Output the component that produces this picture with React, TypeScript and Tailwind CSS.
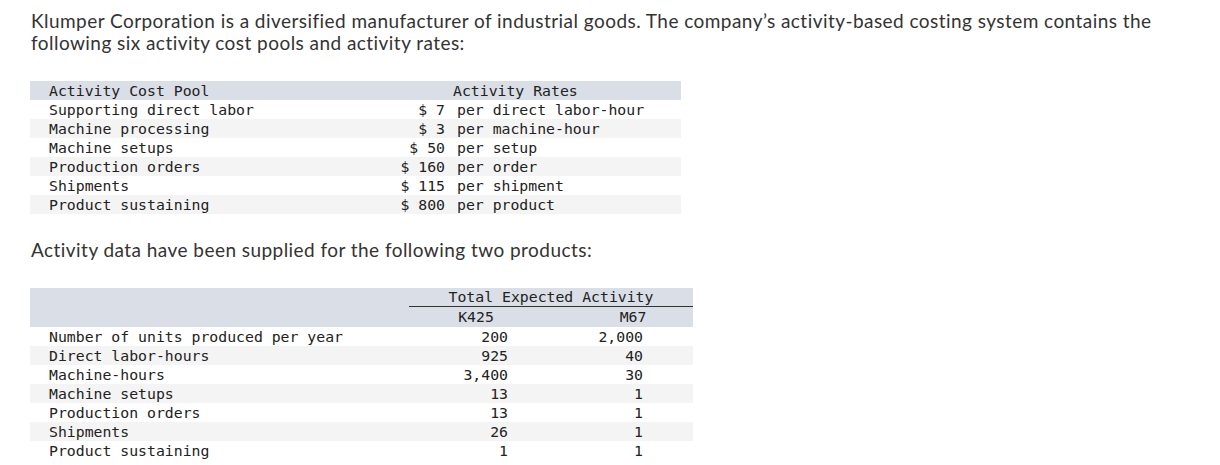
import React from "react";

const mono = { fontFamily: '"DejaVu Sans Mono", "Liberation Mono", monospace' };

const rates: [string, string, string][] = [
  ["Supporting direct labor", "$ 7", "per direct labor-hour"],
  ["Machine processing", "$ 3", "per machine-hour"],
  ["Machine setups", "$ 50", "per setup"],
  ["Production orders", "$ 160", "per order"],
  ["Shipments", "$ 115", "per shipment"],
  ["Product sustaining", "$ 800", "per product"],
];

const data: [string, string, string][] = [
  ["Number of units produced per year", "200", "2,000"],
  ["Direct labor-hours", "925", "40"],
  ["Machine-hours", "3,400", "30"],
  ["Machine setups", "13", "1"],
  ["Production orders", "13", "1"],
  ["Shipments", "26", "1"],
  ["Product sustaining", "1", "1"],
];

export default function App() {
  return (
    <div
      className="w-[1220px] h-[465px] bg-white text-[#333333] overflow-hidden"
      style={{ fontFamily: 'Lato, "Open Sans", sans-serif' }}
    >
      <div className="pl-[31px] pt-[10px] text-[19px] leading-[22px] tracking-[0.45px] whitespace-nowrap">
        Klumper Corporation is a diversified manufacturer of industrial goods. The company’s activity-based costing system contains the
        <br />
        following six activity cost pools and activity rates:
      </div>

      <div className="ml-[30px] mt-[27px] w-[651px] text-[14.8px] leading-[19px] text-[#222]" style={mono}>
        <div className="flex h-[19px] bg-[#dadee6]">
          <div className="w-[350px] pl-[19px]">Activity Cost Pool</div>
          <div className="pl-[73px]">Activity Rates</div>
        </div>
        {rates.map((r, i) => (
          <div key={i} className={`flex h-[19px] ${i % 2 === 1 ? "bg-[#f4f4f4]" : "bg-white"}`}>
            <div className="w-[350px] pl-[19px]">{r[0]}</div>
            <div className="w-[65px] text-right whitespace-pre">{r[1]}</div>
            <div className="pl-[12px] whitespace-pre">{r[2]}</div>
          </div>
        ))}
      </div>

      <div className="pl-[31px] mt-[25px] text-[19px] leading-[22px] tracking-[0.45px]">
        Activity data have been supplied for the following two products:
      </div>

      <div className="ml-[30px] mt-[27px] w-[663px] text-[14.8px] leading-[19px] text-[#222]" style={mono}>
        <div className="flex bg-[#dadee6]">
          <div className="w-[379px]" />
          <div className="w-[284px]">
            <div className="h-[19px] border-b border-[#333] text-center leading-[18px]">Total Expected Activity</div>
            <div className="flex h-[20px] leading-[20px]">
              <div className="w-[142px] text-center pr-[8px]">K425</div>
              <div className="w-[142px] text-center pl-[22px]">M67</div>
            </div>
          </div>
        </div>
        {data.map((r, i) => (
          <div key={i} className={`flex h-[19px] ${i % 2 === 1 ? "bg-[#f4f4f4]" : "bg-white"}`}>
            <div className="w-[379px] pl-[19px]">{r[0]}</div>
            <div className="w-[142px] text-right pr-[43px]">{r[1]}</div>
            <div className="w-[142px] text-right pr-[50px]">{r[2]}</div>
          </div>
        ))}
      </div>
    </div>
  );
}
